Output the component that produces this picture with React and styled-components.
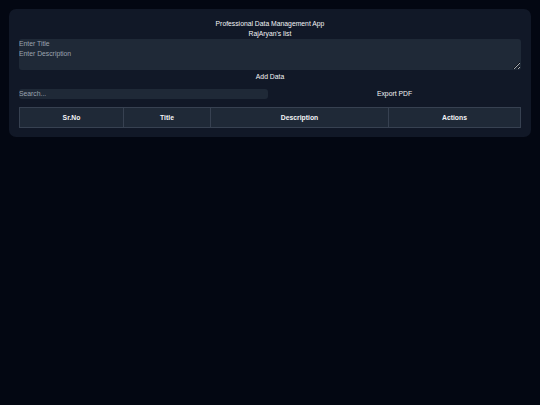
import React, { useState } from "react";
import styled, { createGlobalStyle } from "styled-components";

const GlobalStyle = createGlobalStyle`
  html, body {
    margin: 0;
    padding: 0;
    background: #030712;
    font-family: "Liberation Sans", Arial, sans-serif;
  }
`;

const App = () => {
  const [rows] = useState([]);

  return (
    <>
      <GlobalStyle />
      <Page>
        <Card>
          <Heading>Professional Data Management App</Heading>
          <SubHeading>RajAryan's list</SubHeading>
          <Form>
            <TitleInput placeholder="Enter Title" />
            <DescInput placeholder="Enter Description" />
            <PlainButton>Add Data</PlainButton>
          </Form>
          <Toolbar>
            <SearchInput placeholder="Search..." />
            <PlainButton>Export PDF</PlainButton>
          </Toolbar>
          <Table>
            <thead>
              <tr>
                <Th $w="103px">Sr.No</Th>
                <Th $w="86px">Title</Th>
                <Th $w="177px">Description</Th>
                <Th>Actions</Th>
              </tr>
            </thead>
            <tbody>
              {rows.map((r, i) => (
                <tr key={i}>
                  <td>{i + 1}</td>
                  <td>{r.title}</td>
                  <td>{r.desc}</td>
                  <td />
                </tr>
              ))}
            </tbody>
          </Table>
        </Card>
      </Page>
    </>
  );
};

const Page = styled.div`
  padding: 9px 9px;
`;

const Card = styled.div`
  background: #111827;
  border-radius: 7px;
  padding: 10px 10px 9px;
  display: flex;
  flex-direction: column;
  color: #f3f4f6;
  font-size: 6.8px;
`;

const Heading = styled.div`
  text-align: center;
  line-height: 10px;
`;

const SubHeading = styled.div`
  text-align: center;
  line-height: 10px;
`;

const Form = styled.div`
  display: flex;
  flex-direction: column;
`;

const fieldBase = `
  box-sizing: border-box;
  width: 100%;
  border: none;
  outline: none;
  background: #1f2937;
  color: #e5e7eb;
  font-family: "Liberation Sans", Arial, sans-serif;
  font-size: 6.8px;
  padding: 0;
  margin: 0;
  &::placeholder {
    color: #9ca3af;
  }
`;

const TitleInput = styled.input`
  ${fieldBase}
  height: 10px;
  line-height: 10px;
  border-radius: 3px 3px 0 0;
`;

const DescInput = styled.textarea`
  ${fieldBase}
  display: block;
  height: 21px;
  line-height: 10px;
  border-radius: 0 0 3px 3px;
  resize: vertical;
`;

const PlainButton = styled.button`
  background: transparent;
  border: none;
  color: #f3f4f6;
  font-family: "Liberation Sans", Arial, sans-serif;
  font-size: 6.8px;
  line-height: 10px;
  padding: 2px 0;
  cursor: pointer;
  flex: 1;
`;

const Toolbar = styled.div`
  display: flex;
  align-items: center;
  margin-top: 3px;
`;

const SearchInput = styled.input`
  ${fieldBase}
  flex: 0 0 249px;
  width: 249px;
  height: 10px;
  line-height: 10px;
  border-radius: 3px;
`;

const Table = styled.table`
  margin-top: 6px;
  width: 100%;
  border-collapse: collapse;
  background: #1f2937;
`;

const Th = styled.th`
  width: ${(p) => p.$w || "auto"};
  height: 19px;
  padding: 0;
  border: 1px solid #374151;
  font-weight: bold;
  font-size: 6.8px;
  color: #f3f4f6;
  text-align: center;
`;

export default App;
